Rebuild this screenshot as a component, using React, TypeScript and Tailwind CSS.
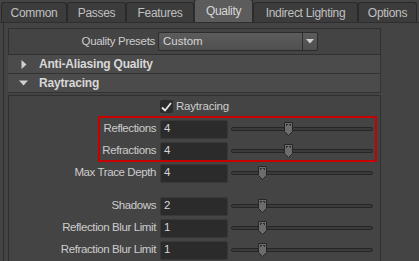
import React from 'react'

const tabs = [
  { name: 'Common', w: 'w-[66px]' },
  { name: 'Passes', w: 'w-[59px]' },
  { name: 'Features', w: 'w-[68px]' },
  { name: 'Quality', w: 'w-[59px]', active: true },
  { name: 'Indirect Lighting', w: 'w-[105px]' },
  { name: 'Options', w: 'w-[59px]' }
]

function Thumb() {
  return (
    <svg width="11" height="16" viewBox="0 0 11 16">
      <path d="M1.5 1.5 H9.5 V10.5 L5.5 14.5 L1.5 10.5 Z" fill="#6c6c6c" stroke="#262626" />
      <rect x="3" y="3" width="1" height="2" fill="#2e2e2e" />
      <rect x="3" y="3" width="2" height="1" fill="#2e2e2e" />
      <rect x="7" y="3" width="1" height="2" fill="#2e2e2e" />
      <rect x="6" y="3" width="2" height="1" fill="#2e2e2e" />
    </svg>
  )
}

function Slider({ pos }: { pos: number }) {
  return (
    <div className="relative w-[142px] h-[16px] flex items-center">
      <div className="w-full h-[4px] rounded-full bg-[#3b3b3b] border border-[#262626]" />
      <div className="absolute top-0" style={{ left: pos - 5 }}>
        <Thumb />
      </div>
    </div>
  )
}

function FieldRow({ label, value, pos }: { label: string; value: string; pos: number }) {
  return (
    <div className="flex items-center h-[22px]">
      <div className="w-[151px] pr-[4px] text-right text-[#cccccc] tracking-[-0.4px]">{label}</div>
      <div className="w-[68px] h-[19px] rounded-[2px] bg-[#2b2b2b] border border-[#383838] flex items-center pl-[3px] text-[#d6d6d6]">
        {value}
      </div>
      <div className="ml-[3px]">
        <Slider pos={pos} />
      </div>
    </div>
  )
}

export default function App() {
  return (
    <div
      className="w-[419px] h-[261px] bg-[#444444] overflow-hidden text-[11.5px] leading-none select-none"
      style={{ fontFamily: '"Liberation Sans", Arial, sans-serif' }}
    >
      {/* tab strip */}
      <div className="h-[23px] flex items-end pl-[1px] border-b border-[#2e2e2e]">
        {tabs.map((t) =>
          t.active ? (
            <div
              key={t.name}
              className={`${t.w} h-[23px] rounded-t-[3px] bg-[#5c5c5c] border border-b-0 border-[#2e2e2e] flex items-center justify-center text-[12px] text-[#d8d8d8] tracking-[-0.3px]`}
            >
              {t.name}
            </div>
          ) : (
            <div
              key={t.name}
              className={`${t.w} h-[20px] rounded-t-[3px] bg-[#3c3c3c] border border-b-0 border-[#2a2a2a] flex items-center justify-center text-[12px] text-[#c0c0c0] tracking-[-0.3px]`}
            >
              {t.name}
            </div>
          )
        )}
      </div>

      <div className="flex h-[238px]">
        <div className="w-[3px]" />
        <div className="w-[378px] border-l border-[#2e2e2e] pl-[4px] pt-[5px] flex flex-col">
          {/* quality presets */}
          <div className="h-[27px] border border-[#303030] flex items-center">
            <div className="w-[149px] pr-[3px] text-right text-[#cccccc] tracking-[-0.3px]">Quality Presets</div>
            <div className="w-[160px] h-[19px] rounded-[2px] border border-[#2c2c2c] bg-gradient-to-b from-[#5c5c5c] to-[#4f4f4f] flex">
              <div className="flex-1 flex items-center pl-[4px] text-[#d6d6d6]">Custom</div>
              <div className="w-[15px] border-l border-[#2c2c2c] flex items-center justify-center">
                <svg width="8" height="5" viewBox="0 0 8 5">
                  <path d="M0 0 H8 L4 4.5 Z" fill="#d0d0d0" />
                </svg>
              </div>
            </div>
          </div>

          {/* section headers */}
          <div className="h-[19px] bg-[#4b4b4b] border-b border-r border-[#333333] flex items-center">
            <div className="w-[31px] flex justify-center">
              <svg width="6" height="9" viewBox="0 0 6 9">
                <path d="M0.5 0 L5.5 4.5 L0.5 9 Z" fill="#d0d0d0" />
              </svg>
            </div>
            <span className="font-bold text-[12px] text-[#d8d8d8] tracking-[-0.2px]">Anti-Aliasing Quality</span>
          </div>
          <div className="h-[19px] bg-[#4b4b4b] border-b border-r border-[#333333] flex items-center">
            <div className="w-[31px] flex justify-center">
              <svg width="9" height="6" viewBox="0 0 9 6">
                <path d="M0 0.5 H9 L4.5 5.5 Z" fill="#d0d0d0" />
              </svg>
            </div>
            <span className="font-bold text-[12px] text-[#d8d8d8] tracking-[-0.2px]">Raytracing</span>
          </div>

          {/* raytracing body */}
          <div className="relative mt-[2px] flex-1 border-t border-l border-r border-[#303030] flex flex-col">
            <div className="flex items-center h-[21px]">
              <div className="w-[151px]" />
              <div className="w-[13px] h-[13px] rounded-[2px] bg-[#2b2b2b] flex items-center justify-center">
                <svg width="11" height="10" viewBox="0 0 11 10">
                  <path d="M1 5.5 L4 8.5 L10 1" fill="none" stroke="#e6e6e6" strokeWidth="1.8" />
                </svg>
              </div>
              <span className="ml-[3px] text-[#cccccc] tracking-[-0.2px]">Raytracing</span>
            </div>
            <div className="h-[1px]" />
            <FieldRow label="Reflections" value="4" pos={57} />
            <FieldRow label="Refractions" value="4" pos={57} />
            <FieldRow label="Max Trace Depth" value="4" pos={31} />
            <div className="h-[11px]" />
            <FieldRow label="Shadows" value="2" pos={31} />
            <FieldRow label="Reflection Blur Limit" value="1" pos={31} />
            <FieldRow label="Refraction Blur Limit" value="1" pos={31} />

            {/* highlight */}
            <div className="absolute left-[89px] top-[20px] w-[279px] h-[46px] border-2 border-[#c80000] pointer-events-none" />
          </div>
        </div>
      </div>
    </div>
  )
}
